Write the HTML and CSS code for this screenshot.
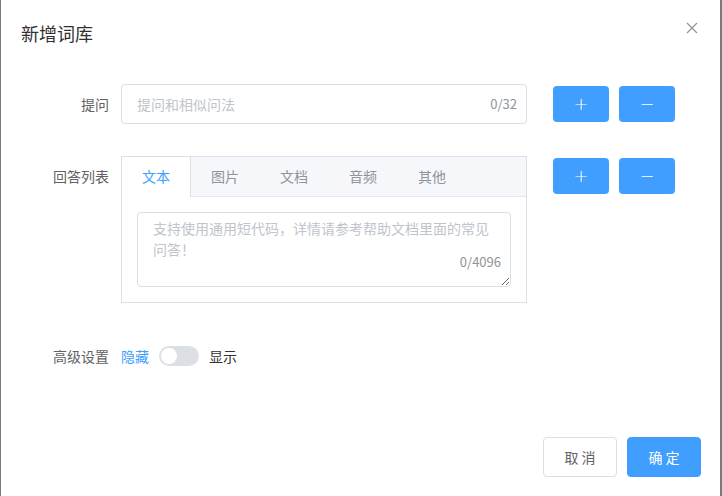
FILE: index.html
```html
<!DOCTYPE html>
<html lang="zh-CN">
<head>
    <meta charset="UTF-8">
    <meta name="viewport" content="width=device-width, initial-scale=1.0">
    <title>新增词库</title>
    <link rel="stylesheet" href="styles.css">
</head>
<body>
    <div class="dialog">
        <div class="dialog-header">
            <span class="dialog-title">新增词库</span>
            <button class="close-btn" aria-label="关闭">
                <svg width="12" height="12" viewBox="0 0 12 12">
                    <path d="M1 1L11 11M11 1L1 11" stroke="#909399" stroke-width="1.2" fill="none"/>
                </svg>
            </button>
        </div>

        <div class="dialog-body">
            <div class="form-item question-row">
                <label class="form-label">提问</label>
                <div class="input-wrap">
                    <input type="text" class="text-input" placeholder="提问和相似问法">
                    <span class="input-count">0/32</span>
                </div>
                <div class="btn-group">
                    <button class="icon-btn">+</button>
                    <button class="icon-btn">−</button>
                </div>
            </div>

            <div class="form-item answer-row">
                <label class="form-label">回答列表</label>
                <div class="tabs-card">
                    <div class="tabs-header">
                        <div class="tab-item active">文本</div>
                        <div class="tab-item">图片</div>
                        <div class="tab-item">文档</div>
                        <div class="tab-item">音频</div>
                        <div class="tab-item">其他</div>
                    </div>
                    <div class="tabs-content">
                        <div class="textarea-wrap">
                            <textarea class="text-area" rows="3" placeholder="支持使用通用短代码，详情请参考帮助文档里面的常见问答！"></textarea>
                            <span class="textarea-count">0/4096</span>
                        </div>
                    </div>
                </div>
                <div class="btn-group tab-btns">
                    <button class="icon-btn">+</button>
                    <button class="icon-btn">−</button>
                </div>
            </div>

            <div class="form-item setting-row">
                <label class="form-label">高级设置</label>
                <div class="switch-wrap">
                    <span class="switch-text active">隐藏</span>
                    <span class="switch"><span class="switch-knob"></span></span>
                    <span class="switch-text">显示</span>
                </div>
            </div>
        </div>

        <div class="dialog-footer">
            <button class="btn btn-default">取 消</button>
            <button class="btn btn-primary">确 定</button>
        </div>
    </div>
</body>
</html>
```

FILE: styles.css
```css
* {
    box-sizing: border-box;
}
body {
    margin: 0;
    background-color: #7a7a7a;
    font-family: 'Noto Sans CJK SC', 'Noto Sans', sans-serif;
    font-size: 14px;
    color: #606266;
}
.dialog {
    position: relative;
    width: 719px;
    height: 496px;
    margin-left: 1px;
    background-color: #fff;
}
.dialog-header {
    padding: 21px 20px 0 20px;
    height: 45px;
}
.dialog-title {
    font-size: 18px;
    line-height: 24px;
    color: #303133;
}
.close-btn {
    position: absolute;
    top: 22px;
    right: 22px;
    border: none;
    background: none;
    padding: 0;
    width: 12px;
    height: 12px;
    cursor: pointer;
}
.close-btn svg {
    display: block;
}
.dialog-body {
    padding-top: 39px;
}
.form-item {
    display: flex;
    align-items: flex-start;
}
.form-label {
    width: 120px;
    padding-right: 12px;
    text-align: right;
    line-height: 40px;
    color: #606266;
}
.input-wrap {
    position: relative;
    width: 406px;
}
.text-input {
    width: 100%;
    height: 40px;
    padding: 0 50px 0 15px;
    border: 1px solid #dcdfe6;
    border-radius: 4px;
    font-family: inherit;
    font-size: 14px;
    color: #606266;
    outline: none;
}
.text-input::placeholder,
.text-area::placeholder {
    color: #c0c4cc;
}
.input-count {
    position: absolute;
    right: 10px;
    top: 0;
    line-height: 40px;
    font-size: 13px;
    color: #909399;
}
.btn-group {
    display: flex;
    gap: 10px;
    margin-left: 26px;
    padding-top: 2px;
}
.icon-btn {
    width: 56px;
    height: 36px;
    border: none;
    border-radius: 4px;
    background-color: #409eff;
    color: #fff;
    font-size: 18px;
    line-height: 36px;
    padding: 0;
    font-family: 'DejaVu Sans', sans-serif;
    font-weight: 300;
    cursor: pointer;
}
.answer-row {
    margin-top: 32px;
}
.tabs-card {
    width: 406px;
    border: 1px solid #dcdfe6;
    background-color: #fff;
}
.tabs-header {
    display: flex;
    height: 40px;
    background-color: #f5f7fa;
    border-bottom: 1px solid #e4e7ed;
}
.tab-item {
    padding: 0 20px;
    line-height: 39px;
    color: #909399;
    border-right: 1px solid transparent;
}
.tab-item.active {
    color: #409eff;
    background-color: #fff;
    border-right-color: #dcdfe6;
    height: 40px;
}
.tabs-content {
    padding: 15px;
}
.textarea-wrap {
    position: relative;
}
.text-area {
    display: block;
    width: 100%;
    height: 75px;
    padding: 5px 15px;
    border: 1px solid #dcdfe6;
    border-radius: 4px;
    font-family: inherit;
    font-size: 14px;
    line-height: 21px;
    color: #606266;
    resize: vertical;
    outline: none;
}
.textarea-count {
    position: absolute;
    right: 10px;
    bottom: 15px;
    font-size: 13px;
    line-height: 20px;
    color: #909399;
    background-color: #fff;
}
.setting-row {
    margin-top: 33px;
}
.switch-wrap {
    display: flex;
    align-items: center;
    gap: 10px;
    height: 40px;
}
.switch-text {
    color: #303133;
}
.switch-text.active {
    color: #409eff;
}
.switch {
    position: relative;
    width: 40px;
    height: 20px;
    border-radius: 10px;
    background-color: #dcdfe6;
}
.switch-knob {
    position: absolute;
    top: 2px;
    left: 2px;
    width: 16px;
    height: 16px;
    border-radius: 50%;
    background-color: #fff;
}
.dialog-footer {
    position: absolute;
    right: 19px;
    bottom: 19px;
    display: flex;
    gap: 10px;
}
.btn {
    width: 74px;
    height: 40px;
    border-radius: 4px;
    font-family: inherit;
    font-size: 14px;
    cursor: pointer;
}
.btn-default {
    background-color: #fff;
    border: 1px solid #dcdfe6;
    color: #606266;
}
.btn-primary {
    background-color: #409eff;
    border: 1px solid #409eff;
    color: #fff;
}
```
